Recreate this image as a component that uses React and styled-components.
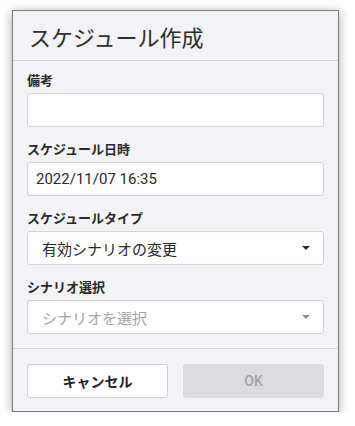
import React from 'react';
import styled, { createGlobalStyle } from 'styled-components';

const Global = createGlobalStyle`
  body {
    margin: 0;
    background: #fff;
    font-family: Roboto, "Noto Sans CJK JP", sans-serif;
  }
`;

const Page = styled.div`
  padding: 10px 0 0 12px;
`;

const Dialog = styled.div`
  width: 325px;
  background: #f3f3f5;
  border: 1px solid #7a7a7a;
  box-shadow: 0 2px 10px rgba(0, 0, 0, 0.35);
  display: flex;
  flex-direction: column;
`;

const Header = styled.div`
  height: 49px;
  display: flex;
  align-items: center;
  padding: 0 16px;
  border-bottom: 1px solid #d3d3d7;
`;

const Title = styled.h1`
  margin: 0;
  font-size: 22px;
  font-weight: 400;
  color: #2f2f2f;
`;

const Body = styled.div`
  padding: 12px 14px 14px;
  display: flex;
  flex-direction: column;
  gap: 15px;
  border-bottom: 1px solid #d8d8dc;
`;

const Field = styled.div`
  display: flex;
  flex-direction: column;
  gap: 4px;
`;

const Label = styled.label`
  font-size: 13px;
  line-height: 16px;
  font-weight: 700;
  color: #2a2a2a;
`;

const Box = styled.div`
  height: 32px;
  background: #fff;
  border: 1px solid #d2d2d6;
  border-radius: 3px;
  display: flex;
  align-items: center;
  padding: 0 ${p => (p.$select ? '13px 0 14px' : '8px')};
  font-size: 15px;
  color: ${p => (p.$placeholder ? '#a3a3a3' : '#2a2a2a')};
`;

const Value = styled.span`
  flex: 1;
`;

const Caret = styled.span`
  width: 0;
  height: 0;
  border-left: 4px solid transparent;
  border-right: 4px solid transparent;
  border-top: 4px solid ${p => (p.$muted ? '#8a8a8a' : '#2a2a2a')};
`;

const Footer = styled.div`
  padding: 15px 14px 13px;
  display: grid;
  grid-template-columns: 1fr 1fr;
  gap: 15px;
`;

const Button = styled.button`
  height: 34px;
  border-radius: 3px;
  font-family: inherit;
  font-size: 14px;
  font-weight: ${p => (p.$primary ? 500 : 700)};
  border: 1px solid ${p => (p.$primary ? '#dcdce0' : '#cfcfd3')};
  background: ${p => (p.$primary ? '#dcdce0' : '#fff')};
  color: ${p => (p.$primary ? '#a0a0a4' : '#222')};
`;

const Select = ({ value, placeholder }) => (
  <Box $select $placeholder={!value}>
    <Value>{value || placeholder}</Value>
    <Caret $muted={!value} />
  </Box>
);

export default function App() {
  return (
    <Page>
      <Global />
      <Dialog>
        <Header>
          <Title>スケジュール作成</Title>
        </Header>
        <Body>
          <Field>
            <Label>備考</Label>
            <Box />
          </Field>
          <Field>
            <Label>スケジュール日時</Label>
            <Box>2022/11/07 16:35</Box>
          </Field>
          <Field>
            <Label>スケジュールタイプ</Label>
            <Select value="有効シナリオの変更" />
          </Field>
          <Field>
            <Label>シナリオ選択</Label>
            <Select placeholder="シナリオを選択" />
          </Field>
        </Body>
        <Footer>
          <Button>キャンセル</Button>
          <Button $primary>OK</Button>
        </Footer>
      </Dialog>
    </Page>
  );
}
